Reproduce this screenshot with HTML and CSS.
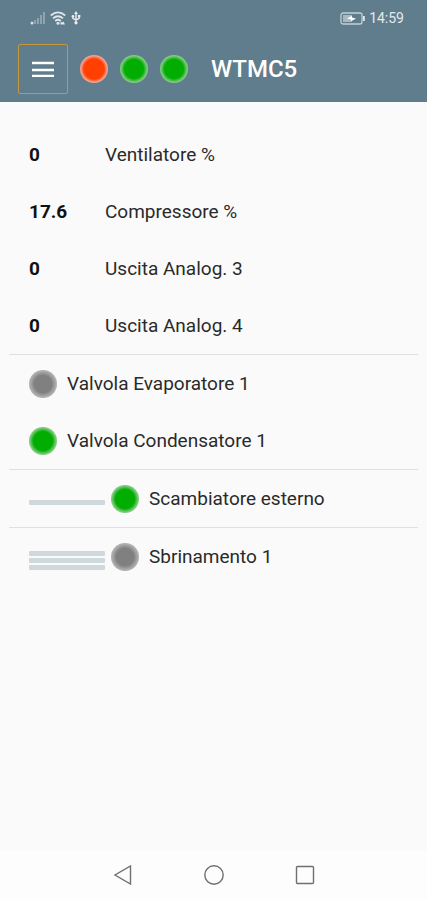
FILE: index.html
```html
<!DOCTYPE html>
<html lang="it">
<head>
<meta charset="utf-8">
<meta name="viewport" content="width=device-width, initial-scale=1">
<title>WTMC5</title>
<link rel="stylesheet" href="styles.css">
</head>
<body>
<header class="header">
  <div class="status">
    <div class="status-icons">
      <svg width="16" height="14" viewBox="0 0 16 14" aria-hidden="true">
        <g fill="#fff"><path opacity=".3" d="M4 9h2v4H4zM7 7h2v6H7zM10 4h2v9h-2zM13 1h2v12h-2z"/><circle opacity=".75" cx="2" cy="12" r="1.500"/></g>
      </svg>
      <svg width="16" height="16" viewBox="0 0 16 16" aria-hidden="true">
        <g fill="none" stroke="#dfe7ea" stroke-width="1.800"><path d="M.8 5.500Q8-.8 15.200 5.500"/><path d="M3 8.400Q8 4 13 8.400"/><path d="M5.200 11Q8 8.600 10.800 11"/></g>
        <g fill="#dfe7ea"><circle cx="8" cy="13.300" r="1.500"/><path d="M10.500 14.500v-3l1.500 1 1.500-1 1.500 3z"/></g>
      </svg>
      <svg width="12" height="14" viewBox="0 0 12 16" aria-hidden="true">
        <g fill="none" stroke="#e9eef0" stroke-width="1.600"><path d="M6 3v10M2.500 6v2.500L6 10.500l3.500-2V6"/></g>
        <g fill="#e9eef0"><path d="M6 0l2.200 3.500H3.800z"/><circle cx="6" cy="13.500" r="1.800"/><circle cx="2.500" cy="6" r="1.500"/><path d="M8.200 4.500h2.800v2.800H8.200z"/></g>
      </svg>
    </div>
    <div class="status-power">
      <svg width="25" height="13" viewBox="0 0 25 13" aria-hidden="true">
        <rect x="1" y="1" width="21" height="11" rx="2" fill="none" stroke="#c3cfd5" stroke-width="1.300"/>
        <path d="M3 3h9v7H3z" fill="#a9b9c1"/>
        <path d="M23 4h1.800v5H23z" fill="#e3eaed"/>
        <path d="M7 6.500l4.500-2.500 1 1.700 3.500.8-4.500 2.500-1-1.700z" fill="#fff"/>
      </svg>
      <time class="clock">14:59</time>
    </div>
  </div>
  <div class="toolbar">
    <button class="menu" type="button" aria-label="Menu">
      <svg width="22" height="16" viewBox="0 0 22 16" aria-hidden="true"><path d="M0 2h22M0 9h22M0 15h22" stroke="#fff" stroke-width="2.600"/></svg>
    </button>
    <div class="lamps">
      <span class="lamp red"></span>
      <span class="lamp green"></span>
      <span class="lamp green"></span>
    </div>
    <h1 class="title">WTMC5</h1>
  </div>
</header>
<main class="content">
  <dl class="group">
    <div class="row"><dt class="label">Ventilatore %</dt><dd class="value">0</dd></div>
    <div class="row"><dt class="label">Compressore %</dt><dd class="value">17.6</dd></div>
    <div class="row"><dt class="label">Uscita Analog. 3</dt><dd class="value">0</dd></div>
    <div class="row"><dt class="label">Uscita Analog. 4</dt><dd class="value">0</dd></div>
  </dl>
  <section class="group">
    <div class="row lamp-row"><span class="lamp grey"></span><span class="label">Valvola Evaporatore 1</span></div>
    <div class="row lamp-row"><span class="lamp green"></span><span class="label">Valvola Condensatore 1</span></div>
  </section>
  <section class="group">
    <div class="row">
      <span class="pipes"><span class="pipe"></span></span>
      <span class="lamp-row"><span class="lamp green"></span><span class="label">Scambiatore esterno</span></span>
    </div>
  </section>
  <section class="group">
    <div class="row">
      <span class="pipes"><span class="pipe"></span><span class="pipe"></span><span class="pipe"></span></span>
      <span class="lamp-row"><span class="lamp grey"></span><span class="label">Sbrinamento 1</span></span>
    </div>
  </section>
</main>
<nav class="nav">
  <button class="nav-button" type="button" aria-label="Indietro"><svg width="20" height="20" viewBox="0 0 20 20"><path d="M17.500 1v18L2 10z"/></svg></button>
  <button class="nav-button" type="button" aria-label="Home"><svg width="20" height="20" viewBox="0 0 20 20"><circle cx="10" cy="10" r="9.200"/></svg></button>
  <button class="nav-button" type="button" aria-label="Recenti"><svg width="20" height="20" viewBox="0 0 20 20"><rect x="1.500" y="1.500" width="17" height="17" rx="1"/></svg></button>
</nav>
</body>
</html>
```
FILE: styles.css
```css
* {
  box-sizing: border-box;
}

body {
  margin: 0;
  min-height: 100vh;
  display: flex;
  flex-direction: column;
  background: #fafafa;
  color: #2a2a2a;
  font-family: Roboto, sans-serif;
  font-size: 19px;
  line-height: 24px;
}

button {
  display: flex;
  align-items: center;
  justify-content: center;
  padding: 0;
  border: 0;
  background: none;
}

.header {
  background: #607d8d;
  color: #fff;
}

.status {
  display: flex;
  justify-content: space-between;
  height: 36px;
  padding: 0 23px 0 30px;
}

.status-icons,
.status-power {
  display: flex;
  align-items: center;
  gap: 4px;
}

.clock {
  color: #e3eaed;
  font-size: 14px;
}

.toolbar {
  display: flex;
  align-items: center;
  padding: 8px 18px;
}

.menu {
  width: 50px;
  height: 50px;
  border: 1px solid #c4973c;
  border-radius: 2px;
}

.lamps {
  display: flex;
  gap: 12px;
  margin-left: 12px;
}

.lamp {
  flex: none;
  width: 28px;
  height: 28px;
  border-radius: 50%;
}

.red {
  background: radial-gradient(closest-side, #ff4000 72%, #f5a090 94%, #f5a090);
}

.green {
  background: radial-gradient(closest-side, #00ad00 68%, #7fcb7f 94%, #7fcb7f);
}

.grey {
  background: radial-gradient(closest-side, #808080 62%, #b0b0b0 94%, #b0b0b0);
}

.title {
  margin: 0 0 0 23px;
  font-size: 24px;
  font-weight: 500;
}

.content {
  flex: 1;
  padding: 24px 9px;
}

.group {
  margin: 0;
  padding: 0 20px;
}

.group + .group {
  border-top: 1px solid #e0e0e0;
}

.row {
  display: flex;
  align-items: center;
  height: 57px;
}

.lamp-row {
  display: flex;
  align-items: center;
  gap: 10px;
}

.value {
  order: -1;
  width: 76px;
  margin: 0;
  color: #111;
  font-weight: 700;
}

.pipes {
  display: grid;
  gap: 2px;
  width: 76px;
  margin-right: 6px;
  padding-top: 7px;
}

.pipe {
  height: 5px;
  border-radius: 1px;
  background: #cfd8dc;
}

.nav {
  display: flex;
  justify-content: center;
  gap: 43px;
  height: 50px;
  background: #fdfdfd;
}

.nav-button {
  width: 48px;
}

.nav-button svg {
  fill: none;
  stroke: #707070;
  stroke-width: 1.4;
}
```
